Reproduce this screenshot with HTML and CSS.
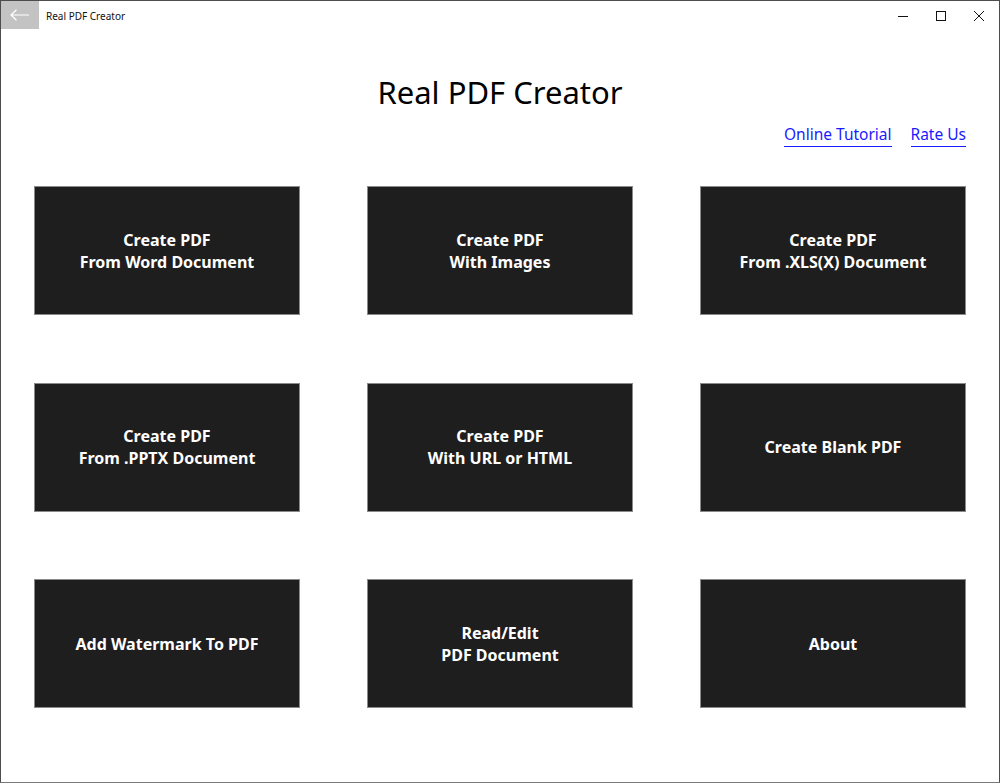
FILE: index.html
```html
<!doctype html>
<html>
<head>
<meta charset="utf-8">
<title>Real PDF Creator</title>
<link rel="stylesheet" href="styles.css">
</head>
<body>
<div class="window">
    <div class="titlebar">
        <div class="back">
            <svg width="20" height="12" viewBox="0 0 20 12"><path d="M1 6 H19 M6.5 0.8 L1 6 L6.5 11.2" fill="none" stroke="#fff" stroke-width="1.2"/></svg>
        </div>
        <div class="apptitle">Real PDF Creator</div>
        <div class="controls">
            <span class="ctl"><svg width="10" height="10" viewBox="0 0 10 10"><path d="M0 5.5 H10" stroke="#111" stroke-width="1"/></svg></span>
            <span class="ctl"><svg width="10" height="10" viewBox="0 0 10 10"><rect x="0.5" y="0.5" width="9" height="9" fill="none" stroke="#111" stroke-width="1"/></svg></span>
            <span class="ctl"><svg width="10" height="10" viewBox="0 0 10 10"><path d="M0 0 L10 10 M10 0 L0 10" stroke="#111" stroke-width="1"/></svg></span>
        </div>
    </div>

    <h1 class="heading">Real PDF Creator</h1>

    <div class="links">
        <a href="#">Online Tutorial</a>
        <a href="#">Rate Us</a>
    </div>

    <div class="tiles">
        <a href="#" class="tile">Create PDF<br>From Word Document</a>
        <a href="#" class="tile">Create PDF<br>With Images</a>
        <a href="#" class="tile">Create PDF<br>From .XLS(X) Document</a>
        <a href="#" class="tile">Create PDF<br>From .PPTX Document</a>
        <a href="#" class="tile">Create PDF<br>With URL or HTML</a>
        <a href="#" class="tile">Create Blank PDF</a>
        <a href="#" class="tile">Add Watermark To PDF</a>
        <a href="#" class="tile">Read/Edit<br>PDF Document</a>
        <a href="#" class="tile">About</a>
    </div>
</div>
</body>
</html>
```

FILE: styles.css
```css
html, body { margin: 0; padding: 0; background: #fff; }
body { font-family: "Segoe UI", "Noto Sans", "Open Sans", sans-serif; }

.window {
    width: 1000px;
    height: 783px;
    box-sizing: border-box;
    border: 1px solid #4d4d4d;
    border-bottom-color: #7a7a7a;
}

.titlebar {
    display: flex;
    align-items: center;
    height: 29px;
}
.back {
    width: 38px;
    height: 28px;
    margin-top: -1px;
    background: #c3c3c3;
    display: flex;
    align-items: center;
    justify-content: center;
}
.apptitle {
    font-family: "Noto Sans", sans-serif;
    font-size: 10px;
    color: #111;
    margin-left: 7px;
    flex: 1;
}
.controls { display: flex; height: 100%; padding-right: 1px; }
.ctl {
    width: 38px;
    display: flex;
    align-items: center;
    justify-content: center;
}

.heading {
    margin: 40px 0 0;
    text-align: center;
    font-weight: normal;
    font-size: 31px;
    line-height: 44px;
    color: #000;
}

.links {
    display: flex;
    justify-content: flex-end;
    gap: 19px;
    padding-right: 33px;
    margin-top: 9px;
    height: 24px;
}
.links a {
    color: #1a1aff;
    font-size: 15.5px;
    text-decoration: none;
    border-bottom: 1px solid #1a1aff;
    line-height: 22px;
}

.tiles {
    display: grid;
    grid-template-columns: repeat(3, 266px);
    grid-auto-rows: 129px;
    column-gap: 67px;
    row-gap: 67.5px;
    padding-left: 33px;
    margin-top: 39px;
}
.tile {
    display: flex;
    align-items: center;
    justify-content: center;
    text-align: center;
    background: #1e1e1e;
    border: 1px solid #8a8a8a;
    color: #fff;
    font-weight: bold;
    font-size: 16px;
    line-height: 22px;
    text-decoration: none;
}
```
